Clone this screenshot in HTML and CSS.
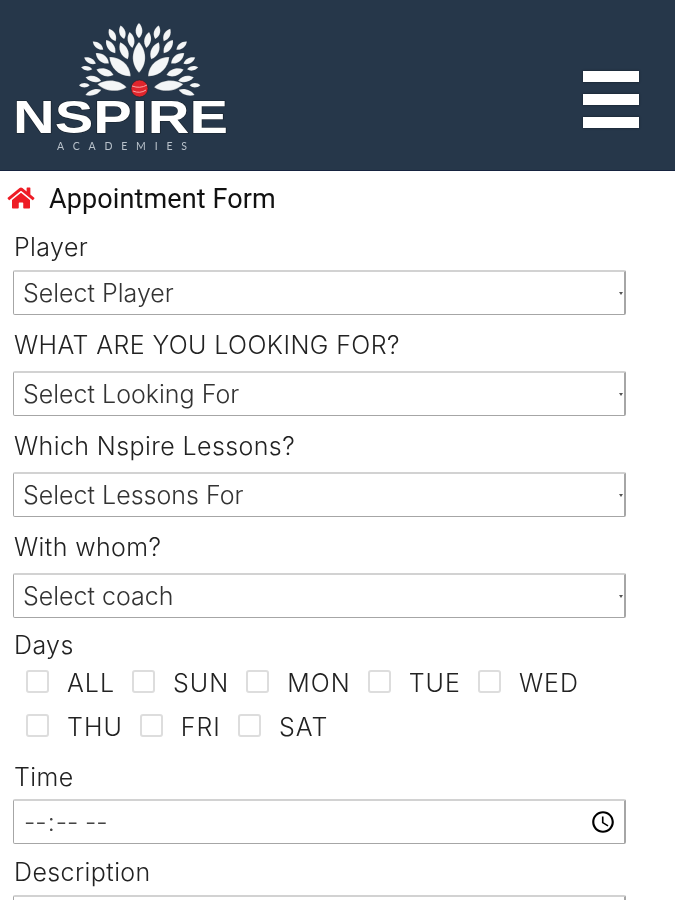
FILE: index.html
```html
<!DOCTYPE html>
<html lang="en">
<head>
<meta charset="utf-8">
<title>Appointment Form</title>
<link rel="stylesheet" href="styles.css">
</head>
<body>
<header class="topbar">
  <svg class="logo" viewBox="0 0 240 170" width="240" height="170" aria-label="Nspire Academies">
    <defs>
      <path id="leaf" d="M0 -50 C50 -24 62 20 0 50 C-62 20 -50 -24 0 -50Z"/>
    </defs>
    <g class="leaves" transform="translate(70 15) scale(.3333)">
      <use href="#leaf" transform="translate(207 47) scale(.24 .46)"/>
      <use href="#leaf" transform="translate(157 52) rotate(-15) scale(.22 .42)"/>
      <use href="#leaf" transform="translate(261 52) rotate(15) scale(.22 .42)"/>
      <use href="#leaf" transform="translate(127 60) rotate(-28) scale(.22 .42)"/>
      <use href="#leaf" transform="translate(291 60) rotate(28) scale(.22 .42)"/>
      <use href="#leaf" transform="translate(183 75) rotate(-10) scale(.24 .48)"/>
      <use href="#leaf" transform="translate(233 75) rotate(10) scale(.24 .48)"/>
      <use href="#leaf" transform="translate(122 95) rotate(-35) scale(.24 .48)"/>
      <use href="#leaf" transform="translate(295 95) rotate(35) scale(.24 .48)"/>
      <use href="#leaf" transform="translate(84 92) rotate(-52) scale(.2 .4)"/>
      <use href="#leaf" transform="translate(335 92) rotate(52) scale(.2 .4)"/>
      <use href="#leaf" transform="translate(162 107) rotate(-24) scale(.28 .56)"/>
      <use href="#leaf" transform="translate(255 107) rotate(24) scale(.28 .56)"/>
      <use href="#leaf" transform="translate(207 127) scale(.44 .92)"/>
      <use href="#leaf" transform="translate(97 130) rotate(-52) scale(.26 .5)"/>
      <use href="#leaf" transform="translate(323 130) rotate(52) scale(.26 .5)"/>
      <use href="#leaf" transform="translate(60 137) rotate(-62) scale(.2 .4)"/>
      <use href="#leaf" transform="translate(358 137) rotate(62) scale(.2 .4)"/>
      <use href="#leaf" transform="translate(150 155) rotate(-48) scale(.42 .86)"/>
      <use href="#leaf" transform="translate(266 155) rotate(48) scale(.42 .86)"/>
      <use href="#leaf" transform="translate(105 172) rotate(-72) scale(.26 .54)"/>
      <use href="#leaf" transform="translate(315 172) rotate(72) scale(.26 .54)"/>
      <use href="#leaf" transform="translate(50 160) rotate(-80) scale(.16 .34)"/>
      <use href="#leaf" transform="translate(368 160) rotate(80) scale(.16 .34)"/>
      <use href="#leaf" transform="translate(70 192) rotate(-78) scale(.22 .48)"/>
      <use href="#leaf" transform="translate(348 192) rotate(78) scale(.22 .48)"/>
      <use href="#leaf" transform="translate(126 212) rotate(-84) scale(.36 .88)"/>
      <use href="#leaf" transform="translate(296 212) rotate(84) scale(.36 .88)"/>
      <use href="#leaf" transform="translate(43 211) rotate(-90) scale(.16 .32)"/>
      <use href="#leaf" transform="translate(375 211) rotate(90) scale(.16 .32)"/>
      <use href="#leaf" transform="translate(70 232) rotate(-108) scale(.2 .5)"/>
      <use href="#leaf" transform="translate(350 232) rotate(108) scale(.2 .5)"/>
    </g>
    <circle class="ball" cx="139.500" cy="88.500" r="8.500"/>
    <path class="seam" d="M132 86 Q140 89 147 85 M133 91 Q140 94 146 90"/>
    <text class="brand" x="13" y="133" textLength="215" lengthAdjust="spacingAndGlyphs">NSPIRE</text>
    <text class="sub" x="57" y="150" textLength="130">ACADEMIES</text>
  </svg>
  <button class="menu" type="button" aria-label="Menu"><span></span><span></span><span></span></button>
</header>
<main class="page">
  <h1 class="title">
    <svg class="home" viewBox="0 0 576 512" width="28" height="24" aria-hidden="true"><path d="M280.37 148.26L96 300.11V464a16 16 0 0 0 16 16l112.06-.29a16 16 0 0 0 15.92-16V368a16 16 0 0 1 16-16h64a16 16 0 0 1 16 16v95.64a16 16 0 0 0 16 16.05L464 480a16 16 0 0 0 16-16V300L295.67 148.26a12.19 12.19 0 0 0-15.3 0zM571.6 251.47L488 182.56V44.05a12 12 0 0 0-12-12h-56a12 12 0 0 0-12 12v72.61L318.47 43a48 48 0 0 0-61 0L4.34 251.47a12 12 0 0 0-1.6 16.9l25.5 31A12 12 0 0 0 45.15 301l235.22-193.74a12.19 12.19 0 0 1 15.3 0L530.9 301a12 12 0 0 0 16.9-1.6l25.5-31a12 12 0 0 0-1.7-16.93z"/></svg>
    <span>Appointment Form</span>
  </h1>
  <form class="form">
    <div class="field">
      <label class="label label-first">Player</label>
      <div class="select"><select><option>Select Player</option></select></div>
    </div>
    <div class="field">
      <label class="label">WHAT ARE YOU LOOKING FOR?</label>
      <div class="select"><select><option>Select Looking For</option></select></div>
    </div>
    <div class="field">
      <label class="label">Which Nspire Lessons?</label>
      <div class="select"><select><option>Select Lessons For</option></select></div>
    </div>
    <div class="field">
      <label class="label">With whom?</label>
      <div class="select"><select><option>Select coach</option></select></div>
    </div>
    <div class="field days-field">
      <label class="label label-tight">Days</label>
      <div class="days">
        <label class="day"><input type="checkbox"><span>ALL</span></label>
        <label class="day"><input type="checkbox"><span>SUN</span></label>
        <label class="day"><input type="checkbox"><span>MON</span></label>
        <label class="day"><input type="checkbox"><span>TUE</span></label>
        <label class="day"><input type="checkbox"><span>WED</span></label>
        <label class="day"><input type="checkbox"><span>THU</span></label>
        <label class="day"><input type="checkbox"><span>FRI</span></label>
        <label class="day"><input type="checkbox"><span>SAT</span></label>
      </div>
    </div>
    <div class="field">
      <label class="label label-tight">Time</label>
      <input class="time" type="time">
    </div>
    <div class="field">
      <label class="label label-last">Description</label>
      <textarea class="desc"></textarea>
    </div>
  </form>
</main>
</body>
</html>
```
FILE: styles.css
```css
* { box-sizing: border-box; }
html, body { margin: 0; height: 900px; overflow: hidden; background: #fff; }
body { font-family: "Inter", "Lato", sans-serif; color: #333; }

.topbar {
  height: 171px;
  background: #26374a;
  border-bottom: 1px solid #16233f;
  display: flex;
  justify-content: space-between;
  align-items: flex-start;
  padding-right: 36px;
}
.logo { display: block; flex: none; filter: blur(.4px); }
.leaves use { fill: #f4f6f7; stroke: #18222c; stroke-width: 1; vector-effect: non-scaling-stroke; }
.ball { fill: #e0252c; stroke: #18222c; stroke-width: .6; }
.seam { fill: none; stroke: #f6a6a6; stroke-width: 1; }
.brand {
  font: 700 46px "Liberation Sans", sans-serif;
  fill: #fff;
  stroke: #18222c;
  stroke-width: 1.2;
  paint-order: stroke;
}
.sub { font: 400 10.5px "Lato", sans-serif; fill: #b9c2cb; }

.menu {
  display: flex;
  flex-direction: column;
  gap: 12px;
  margin-top: 71px;
  padding: 0;
  border: 0;
  background: none;
}
.menu span {
  display: block;
  width: 56px;
  height: 11px;
  background: #fff;
  box-shadow: 0 0 2px #111a24;
}

.page { padding: 0 49px 0 13px; filter: blur(.3px); }
.title {
  display: flex;
  align-items: center;
  gap: 14px;
  margin: 13px 0 22px -6px;
  height: 30px;
  font: 400 27px "Roboto", sans-serif;
  letter-spacing: .12px;
  color: #111;
}
.home { fill: #ee1c25; flex: none; margin-top: -3px; }

.form { display: flex; flex-direction: column; }
.field { display: flex; flex-direction: column; }
.label {
  display: block;
  height: 38px;
  padding: 1px 0 0 1px;
  font-size: 25px;
  font-weight: 300;
  line-height: 22px;
  letter-spacing: .4px;
  color: #222;
}
.label-first { height: 34px; padding-top: 0; }
.label-tight { height: 33px; padding-top: 0; }
.label-last { height: 34px; padding-top: 0; }
.select { position: relative; height: 45px; margin-bottom: 18px; }
.select select {
  appearance: none;
  width: 100%;
  height: 100%;
  padding: 0 9px;
  font: 300 25px "Inter", sans-serif;
  color: #333;
  background: #fff;
  border: 1px solid #a6a6a6;
  border-top: 2px solid #d2d2d2;
  border-right-width: 2px;
  border-radius: 2px;
}
.select::after {
  content: "";
  position: absolute;
  right: 3px;
  top: 22px;
  border: 2.5px solid transparent;
  border-top: 3px solid #555;
}
.days-field { margin-top: -2px; }
.days {
  display: flex;
  flex-wrap: wrap;
  column-gap: 17px;
  row-gap: 12px;
  padding-left: 13px;
  margin-bottom: 23px;
}
.day {
  display: flex;
  align-items: center;
  gap: 18px;
  height: 32px;
  font-size: 25px;
  font-weight: 300;
  letter-spacing: 1px;
  color: #222;
}
.day input {
  appearance: none;
  margin: 0;
  width: 23px;
  height: 23px;
  border: 2px solid #ddd;
  border-radius: 3px;
  background: #fff;
  position: relative;
  top: -2px;
}
.time {
  display: block;
  width: 100%;
  height: 45px;
  margin-bottom: 17px;
  padding: 0 5px 0 9px;
  font: 300 25px "Inter", sans-serif;
  letter-spacing: -2.6px;
  color: #444;
  background: #fff;
  border: 1px solid #a6a6a6;
  border-top: 2px solid #d2d2d2;
  border-right-width: 2px;
  border-radius: 2px;
}
.desc {
  display: block;
  width: 100%;
  height: 120px;
  border: 1px solid #a6a6a6;
  border-top: 2px solid #d2d2d2;
  border-right-width: 2px;
  border-radius: 2px;
}
```
